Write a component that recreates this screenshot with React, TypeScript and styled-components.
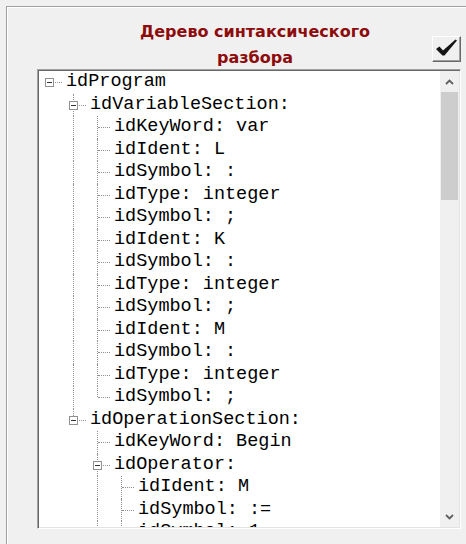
import React from "react";
import styled, { createGlobalStyle } from "styled-components";

const Global = createGlobalStyle`
  html, body { margin: 0; padding: 0; background: #f0f0f0; }
  body { width: 466px; height: 544px; overflow: hidden; }
`;

const Screen = styled.div`
  width: 466px;
  height: 544px;
  box-sizing: border-box;
  padding: 6px 0 0 6px;
  overflow: hidden;
  background: #f0f0f0;
`;

const Panel = styled.div`
  width: 470px;
  height: 100%;
  box-sizing: border-box;
  border-left: 1px solid #a0a0a0;
  border-top: 1px solid #a0a0a0;
  box-shadow: inset 1px 1px 0 #ffffff;
  padding-left: 30px;
  display: flex;
  flex-direction: column;
`;

const Header = styled.div`
  width: 424px;
  height: 62px;
  display: flex;
  align-items: flex-start;
`;

const Title = styled.div`
  flex: 1;
  padding: 12px 0 0 41px;
  text-align: center;
  font-family: "DejaVu Sans", "Liberation Sans", sans-serif;
  font-weight: bold;
  font-size: 16px;
  line-height: 26px;
  color: #8e0b0b;
`;

const CheckButton = styled.button`
  margin-top: 29px;
  width: 29px;
  height: 26px;
  padding: 0;
  box-sizing: border-box;
  background: #f0f0f0;
  border-style: solid;
  border-width: 1px;
  border-color: #ffffff #696969 #696969 #ffffff;
  box-shadow: inset -1px -1px 0 #a0a0a0;
  display: flex;
  align-items: center;
  justify-content: center;
`;

const TreeBox = styled.div`
  width: 424px;
  height: 460px;
  box-sizing: border-box;
  border-style: solid;
  border-width: 1px;
  border-color: #a0a0a0 #ffffff #ffffff #a0a0a0;
  box-shadow: inset 1px 1px 0 #696969, inset -1px -1px 0 #e3e3e3;
  padding: 1px;
  display: flex;
`;

const TreeArea = styled.div`
  flex: 1;
  background: #ffffff;
  overflow: hidden;
  display: flex;
  flex-direction: column;
`;

const Row = styled.div`
  display: flex;
  height: 22.5px;
  flex: none;
`;

const Guide = styled.span<{ $line: boolean }>`
  position: relative;
  flex: none;
  width: 24px;
  &::before {
    content: "";
    display: ${(p) => (p.$line ? "block" : "none")};
    position: absolute;
    left: 10px;
    top: 0;
    bottom: 0;
    border-left: 1px dotted #8f8f8f;
  }
`;

const Joint = styled.span<{ $up: boolean; $down: boolean }>`
  position: relative;
  flex: none;
  width: 24px;
  &::before {
    content: "";
    display: ${(p) => (p.$up || p.$down ? "block" : "none")};
    position: absolute;
    left: 10px;
    top: ${(p) => (p.$up ? "0" : "50%")};
    bottom: ${(p) => (p.$down ? "0" : "50%")};
    border-left: 1px dotted #8f8f8f;
  }
  &::after {
    content: "";
    position: absolute;
    left: 11px;
    right: 1px;
    top: 11px;
    border-top: 1px dotted #8f8f8f;
  }
`;

const Toggle = styled.span`
  position: absolute;
  z-index: 1;
  left: 6px;
  top: 7px;
  width: 9px;
  height: 9px;
  box-sizing: border-box;
  border: 1px solid #919191;
  background: #ffffff;
  &::after {
    content: "";
    position: absolute;
    left: 1px;
    right: 1px;
    top: 3px;
    height: 1px;
    background: #333333;
  }
`;

const Label = styled.span`
  font-family: "Liberation Mono", "Courier New", monospace;
  font-size: 18.5px;
  line-height: 22.5px;
  padding-left: 3px;
  white-space: pre;
  color: #000000;
`;

const ScrollBar = styled.div`
  width: 19px;
  flex: none;
  background: #f0f0f0;
  display: flex;
  flex-direction: column;
`;

const ArrowButton = styled.div`
  height: 21px;
  flex: none;
  display: flex;
  align-items: center;
  justify-content: center;
`;

const Track = styled.div`
  flex: 1;
  display: flex;
  flex-direction: column;
`;

const Thumb = styled.div`
  height: 108px;
  margin: 0 1px;
  background: #cdcdcd;
`;

type Node = { level: number; text: string; open?: boolean };

const nodes: Node[] = [
  { level: 0, text: "idProgram", open: true },
  { level: 1, text: "idVariableSection:", open: true },
  { level: 2, text: "idKeyWord: var" },
  { level: 2, text: "idIdent: L" },
  { level: 2, text: "idSymbol: :" },
  { level: 2, text: "idType: integer" },
  { level: 2, text: "idSymbol: ;" },
  { level: 2, text: "idIdent: K" },
  { level: 2, text: "idSymbol: :" },
  { level: 2, text: "idType: integer" },
  { level: 2, text: "idSymbol: ;" },
  { level: 2, text: "idIdent: M" },
  { level: 2, text: "idSymbol: :" },
  { level: 2, text: "idType: integer" },
  { level: 2, text: "idSymbol: ;" },
  { level: 1, text: "idOperationSection:", open: true },
  { level: 2, text: "idKeyWord: Begin" },
  { level: 2, text: "idOperator:", open: true },
  { level: 3, text: "idIdent: M" },
  { level: 3, text: "idSymbol: :=" },
  { level: 3, text: "idSymbol: 1" },
  { level: 3, text: "idSymbol: ;" },
  { level: 2, text: "idKeyWord: End" },
];

function hasNext(i: number): boolean {
  const L = nodes[i].level;
  for (let j = i + 1; j < nodes.length; j++) {
    if (nodes[j].level < L) return false;
    if (nodes[j].level === L) return true;
  }
  return false;
}

function ancestorContinues(i: number, k: number): boolean {
  for (let j = i - 1; j >= 0; j--) {
    if (nodes[j].level === k) return hasNext(j);
  }
  return false;
}

const Check = () => (
  <svg width="27" height="24" viewBox="1 1 27 24">
    <polygon
      points="4,13 7.5,10.5 11,14.5 23.5,3.5 25,4.5 12.5,19.5 10.5,19.5"
      fill="#141414"
    />
  </svg>
);

const Chevron = ({ up }: { up: boolean }) => (
  <svg width="9" height="6" viewBox="0 0 9 6">
    <path
      d={up ? "M1 5 L4.5 1.5 L8 5" : "M1 1 L4.5 4.5 L8 1"}
      stroke="#606060"
      strokeWidth="1.8"
      fill="none"
    />
  </svg>
);

export default function App() {
  return (
    <>
      <Global />
      <Screen>
        <Panel>
          <Header>
            <Title>
              Дерево синтаксического
              <br />
              разбора
            </Title>
            <CheckButton>
              <Check />
            </CheckButton>
          </Header>
          <TreeBox>
            <TreeArea>
              {nodes.map((n, i) => (
                <Row key={i}>
                  {Array.from({ length: n.level }, (_, k) => (
                    <Guide key={k} $line={k > 0 && ancestorContinues(i, k)} />
                  ))}
                  <Joint $up={n.level > 0} $down={hasNext(i)}>
                    {n.open && <Toggle />}
                  </Joint>
                  <Label>{n.text}</Label>
                </Row>
              ))}
            </TreeArea>
            <ScrollBar>
              <ArrowButton>
                <Chevron up />
              </ArrowButton>
              <Track>
                <Thumb />
              </Track>
              <ArrowButton>
                <Chevron up={false} />
              </ArrowButton>
            </ScrollBar>
          </TreeBox>
        </Panel>
      </Screen>
    </>
  );
}
